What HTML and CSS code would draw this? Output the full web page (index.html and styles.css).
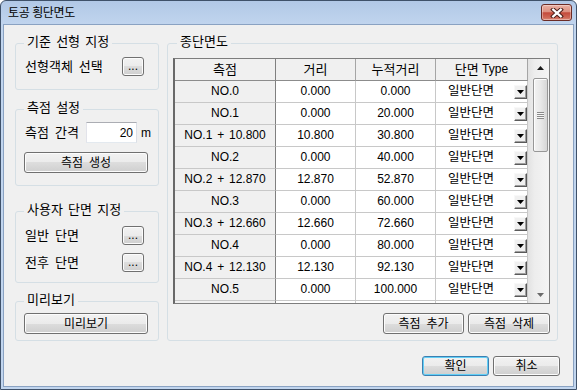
FILE: index.html
```html
<!DOCTYPE html>
<html lang="ko">
<head>
<meta charset="utf-8">
<title>토공 횡단면도</title>
<link rel="stylesheet" href="styles.css">
</head>
<body>
<div class="window">
  <div class="titlebar">
    <span class="title">토공 횡단면도</span>
    <button class="close" aria-label="닫기">
      <svg width="14" height="10" viewBox="0 0 14 10">
        <path d="M3.2 1.6 L10.8 8.4 M10.8 1.6 L3.2 8.4" stroke="#4a1d18" stroke-width="4.2" stroke-linecap="square"/>
        <path d="M3.2 1.6 L10.8 8.4 M10.8 1.6 L3.2 8.4" stroke="#ffffff" stroke-width="2.2" stroke-linecap="square"/>
      </svg>
    </button>
  </div>
  <div class="client">
    <div class="main">
      <div class="left">
        <section class="group g1">
          <div class="gtitle">기준 선형 지정</div>
          <div class="row"><span class="lbl">선형객체 선택</span><button class="btn dots">...</button></div>
        </section>
        <section class="group g2">
          <div class="gtitle">측점 설정</div>
          <div class="row"><span class="lbl lbl-w">측점 간격</span><input class="num" value="20"><span class="unit">m</span></div>
          <button class="btn wide gen">측점 생성</button>
        </section>
        <section class="group g3">
          <div class="gtitle">사용자 단면 지정</div>
          <div class="row"><span class="lbl">일반 단면</span><button class="btn dots">...</button></div>
          <div class="row"><span class="lbl">전후 단면</span><button class="btn dots">...</button></div>
        </section>
        <section class="group g4">
          <div class="gtitle">미리보기</div>
          <button class="btn wide prev">미리보기</button>
        </section>
      </div>
      <section class="group right">
        <div class="gtitle gt-right">종단면도</div>
        <div class="grid">
          <div class="grid-body">
            <div class="grow ghead"><div class="c c1"><span class="ko">측점</span></div><div class="c"><span class="ko">거리</span></div><div class="c"><span class="ko">누적거리</span></div><div class="c"><span class="ko">단면</span>&nbsp;Type</div></div>
            <div class="grow"><div class="c c1">NO.0</div><div class="c">0.000</div><div class="c">0.000</div><div class="c cb"><span>일반단면</span><span class="dd"><svg width="7" height="4" viewBox="0 0 7 4"><path d="M0 0H7L3.5 4Z"/></svg></span></div></div>
            <div class="grow"><div class="c c1">NO.1</div><div class="c">0.000</div><div class="c">20.000</div><div class="c cb"><span>일반단면</span><span class="dd"><svg width="7" height="4" viewBox="0 0 7 4"><path d="M0 0H7L3.5 4Z"/></svg></span></div></div>
            <div class="grow"><div class="c c1">NO.1 + 10.800</div><div class="c">10.800</div><div class="c">30.800</div><div class="c cb"><span>일반단면</span><span class="dd"><svg width="7" height="4" viewBox="0 0 7 4"><path d="M0 0H7L3.5 4Z"/></svg></span></div></div>
            <div class="grow"><div class="c c1">NO.2</div><div class="c">0.000</div><div class="c">40.000</div><div class="c cb"><span>일반단면</span><span class="dd"><svg width="7" height="4" viewBox="0 0 7 4"><path d="M0 0H7L3.5 4Z"/></svg></span></div></div>
            <div class="grow"><div class="c c1">NO.2 + 12.870</div><div class="c">12.870</div><div class="c">52.870</div><div class="c cb"><span>일반단면</span><span class="dd"><svg width="7" height="4" viewBox="0 0 7 4"><path d="M0 0H7L3.5 4Z"/></svg></span></div></div>
            <div class="grow"><div class="c c1">NO.3</div><div class="c">0.000</div><div class="c">60.000</div><div class="c cb"><span>일반단면</span><span class="dd"><svg width="7" height="4" viewBox="0 0 7 4"><path d="M0 0H7L3.5 4Z"/></svg></span></div></div>
            <div class="grow"><div class="c c1">NO.3 + 12.660</div><div class="c">12.660</div><div class="c">72.660</div><div class="c cb"><span>일반단면</span><span class="dd"><svg width="7" height="4" viewBox="0 0 7 4"><path d="M0 0H7L3.5 4Z"/></svg></span></div></div>
            <div class="grow"><div class="c c1">NO.4</div><div class="c">0.000</div><div class="c">80.000</div><div class="c cb"><span>일반단면</span><span class="dd"><svg width="7" height="4" viewBox="0 0 7 4"><path d="M0 0H7L3.5 4Z"/></svg></span></div></div>
            <div class="grow"><div class="c c1">NO.4 + 12.130</div><div class="c">12.130</div><div class="c">92.130</div><div class="c cb"><span>일반단면</span><span class="dd"><svg width="7" height="4" viewBox="0 0 7 4"><path d="M0 0H7L3.5 4Z"/></svg></span></div></div>
            <div class="grow"><div class="c c1">NO.5</div><div class="c">0.000</div><div class="c">100.000</div><div class="c cb"><span>일반단면</span><span class="dd"><svg width="7" height="4" viewBox="0 0 7 4"><path d="M0 0H7L3.5 4Z"/></svg></span></div></div>
            <div class="grow"><div class="c c1"></div><div class="c"></div><div class="c"></div><div class="c cb"><span></span><span class="dd"></span></div></div>
          </div>
          <div class="vscroll">
            <div class="sarrow"><svg width="7" height="4" viewBox="0 0 7 4"><path d="M3.5 0L7 4H0Z" fill="#1a1a1a"/></svg></div>
            <div class="thumb"><span class="grip"></span></div>
            <div class="sfill"></div>
            <div class="sarrow"><svg width="7" height="4" viewBox="0 0 7 4"><path d="M0 0H7L3.5 4Z" fill="#6a6a6a"/></svg></div>
          </div>
        </div>
        <div class="actions">
          <button class="btn act1">측점 추가</button>
          <button class="btn act2">측점 삭제</button>
        </div>
      </section>
    </div>
    <div class="footer">
      <button class="btn ok">확인</button>
      <button class="btn cancel">취소</button>
    </div>
  </div>
</div>
</body>
</html>
```

FILE: styles.css
```css
body {
  margin: 0;
  font-family: "Liberation Sans", "Noto Sans CJK KR", sans-serif;
  font-size: 12px;
  color: #000;
}

button, input {
  font-family: "Liberation Sans", "Noto Sans CJK KR", sans-serif;
  font-size: 12px;
  color: #000;
}

.window {
  width: 577px;
  height: 390px;
  box-sizing: border-box;
  border: 1px solid #3f5169;
  border-radius: 6px 6px 0 0;
  background: linear-gradient(#b1c8e6, #c1d5ee 24px, #c1d5ee);
  padding: 0 2px 2px;
  display: flex;
  flex-direction: column;
}

.titlebar {
  height: 23px;
  flex: none;
  display: flex;
  align-items: center;
  justify-content: space-between;
  padding: 0 2px 0 5px;
}

.title {
  font-size: 12px;
  letter-spacing: -0.4px;
  line-height: 16px;
  color: #000;
}

.close {
  width: 31px;
  height: 17px;
  box-sizing: border-box;
  padding: 0;
  border: 1px solid #6b2b25;
  border-radius: 3px;
  background: linear-gradient(#eab0a3 0%, #dc9080 45%, #c44a3b 52%, #cf6a58 85%, #dd8d7c 100%);
  box-shadow: inset 0 0 0 1px rgba(255, 255, 255, 0.35);
  display: flex;
  align-items: center;
  justify-content: center;
}

.client {
  flex: 1;
  border: 1px solid #8aa2c2;
  background: #f0f0f0;
}

.main {
  display: flex;
  gap: 8px;
  padding: 18px 0 0 11px;
}

.left {
  width: 144px;
  display: flex;
  flex-direction: column;
}

.group {
  box-sizing: border-box;
  border: 1px solid #d5dfe5;
  border-radius: 3px;
  display: flex;
  flex-direction: column;
  align-items: flex-start;
  padding: 0 0 0 9px;
}

.gtitle {
  margin: -10px 0 0 -1px;
  padding: 0 3px;
  font-size: 13px;
  line-height: 16px;
  background: #f0f0f0;
  word-spacing: 1.6px;
}

.g1 { height: 47px; }
.g2 { height: 77px; margin-top: 19px; }
.g3 { height: 72px; margin-top: 25px; }
.g4 { height: 40px; margin-top: 18px; }

.row {
  display: flex;
  align-items: center;
  align-self: stretch;
  height: 19px;
}

.g1 .row { margin-top: 7px; }
.g2 .row { height: 21px; margin-top: 6px; }
.g3 .row { margin-top: 8px; }

.lbl {
  font-size: 13px;
  line-height: 16px;
  word-spacing: 2.4px;
}

.lbl-w {
  width: 61px;
  flex: none;
}

.btn {
  box-sizing: border-box;
  padding: 0;
  border: 1px solid #707070;
  border-radius: 3px;
  background: linear-gradient(#f2f2f2 0%, #ebebeb 50%, #dddddd 50%, #cfcfcf 100%);
  box-shadow: inset 0 0 0 1px #fcfcfc;
  word-spacing: 2.7px;
  line-height: 16px;
}

.dots {
  margin-left: auto;
  margin-right: 14px;
  width: 22px;
  height: 19px;
  line-height: 17px;
  word-spacing: 0;
}

.wide {
  width: 124px;
  height: 21px;
  margin-left: -1px;
}

.gen { margin-top: 9px; }
.prev { margin-top: 5px; }

.num {
  width: 51px;
  height: 21px;
  box-sizing: border-box;
  margin: 0;
  padding: 0 3px 0 0;
  border: 1px solid;
  border-color: #abadb3 #dbdfe6 #e3e9ef #e2e3ea;
  background: #fff;
  text-align: right;
  outline: none;
}

.unit {
  margin-left: 4px;
}

.right {
  width: 391px;
  height: 298px;
  padding: 0 7px 0 5px;
}

.gt-right {
  margin-left: 4px;
}

.grid {
  margin-top: 8px;
  width: 377px;
  height: 246px;
  box-sizing: border-box;
  border: 1px solid #7d7d7d;
  border-left: 2px solid #696969;
  display: flex;
  background: #fff;
  overflow: hidden;
}

.grid-body {
  width: 353px;
  flex: none;
  overflow: hidden;
}

.grow {
  display: grid;
  grid-template-columns: 101px 80px 80px 92px;
  height: 22px;
}

.c {
  box-sizing: border-box;
  border-right: 1px solid #c8c8c8;
  border-bottom: 1px solid #c8c8c8;
  display: flex;
  align-items: center;
  justify-content: center;
  white-space: nowrap;
  line-height: 21px;
  word-spacing: 1.5px;
  overflow: hidden;
}

.ko {
  font-size: 13px;
}

.c1 {
  background: #f0f0f0;
  border-right-color: #808080;
}

.ghead .c {
  background: #f0f0f0;
  border-bottom-color: #8c8c8c;
  border-right-color: #a5a5a5;
  word-spacing: 0;
}

.ghead .c1 {
  border-right-color: #808080;
}

.cb {
  justify-content: space-between;
  padding: 0 0 0 12px;
  font-size: 12.5px;
}

.dd {
  width: 13px;
  height: 14px;
  box-sizing: border-box;
  border: 1px solid;
  border-color: #f8f8f8 #5a5a5a #5a5a5a #f8f8f8;
  box-shadow: inset -1px -1px 0 #a0a0a0;
  background: #f0f0f0;
  display: flex;
  align-items: center;
  justify-content: center;
  padding-right: 1px;
}

.vscroll {
  width: 21px;
  flex: none;
  box-sizing: border-box;
  padding-left: 3px;
  display: flex;
  flex-direction: column;
  align-items: center;
  background: linear-gradient(to right, #e2e2e2, #ededed 30%, #f4f4f4);
}

.sarrow {
  height: 17px;
  flex: none;
  display: flex;
  align-items: center;
  justify-content: center;
}

.thumb {
  margin-top: 2px;
  width: 15px;
  height: 74px;
  flex: none;
  box-sizing: border-box;
  border: 1px solid #979797;
  border-radius: 2px;
  background: linear-gradient(to right, #f3f3f3, #e8e8e8 50%, #d6d6d6);
  box-shadow: inset 1px 1px 0 #fdfdfd;
  display: flex;
  align-items: center;
  justify-content: center;
}

.grip {
  width: 7px;
  height: 7px;
  background: repeating-linear-gradient(#8a8a8a 0, #8a8a8a 1px, #f6f6f6 1px, #f6f6f6 2px);
}

.sfill {
  flex: 1;
}

.actions {
  align-self: stretch;
  display: flex;
  justify-content: flex-end;
  gap: 4px;
  margin-top: 9px;
}

.act1 { width: 81px; height: 21px; }
.act2 { width: 82px; height: 21px; }

.footer {
  display: flex;
  justify-content: flex-end;
  gap: 4px;
  padding: 15px 13px 0 0;
}

.ok, .cancel {
  width: 67px;
  height: 20px;
}

.ok {
  border-color: #3c7fb1;
  box-shadow: inset 0 0 0 1px #62cff6;
}
```
